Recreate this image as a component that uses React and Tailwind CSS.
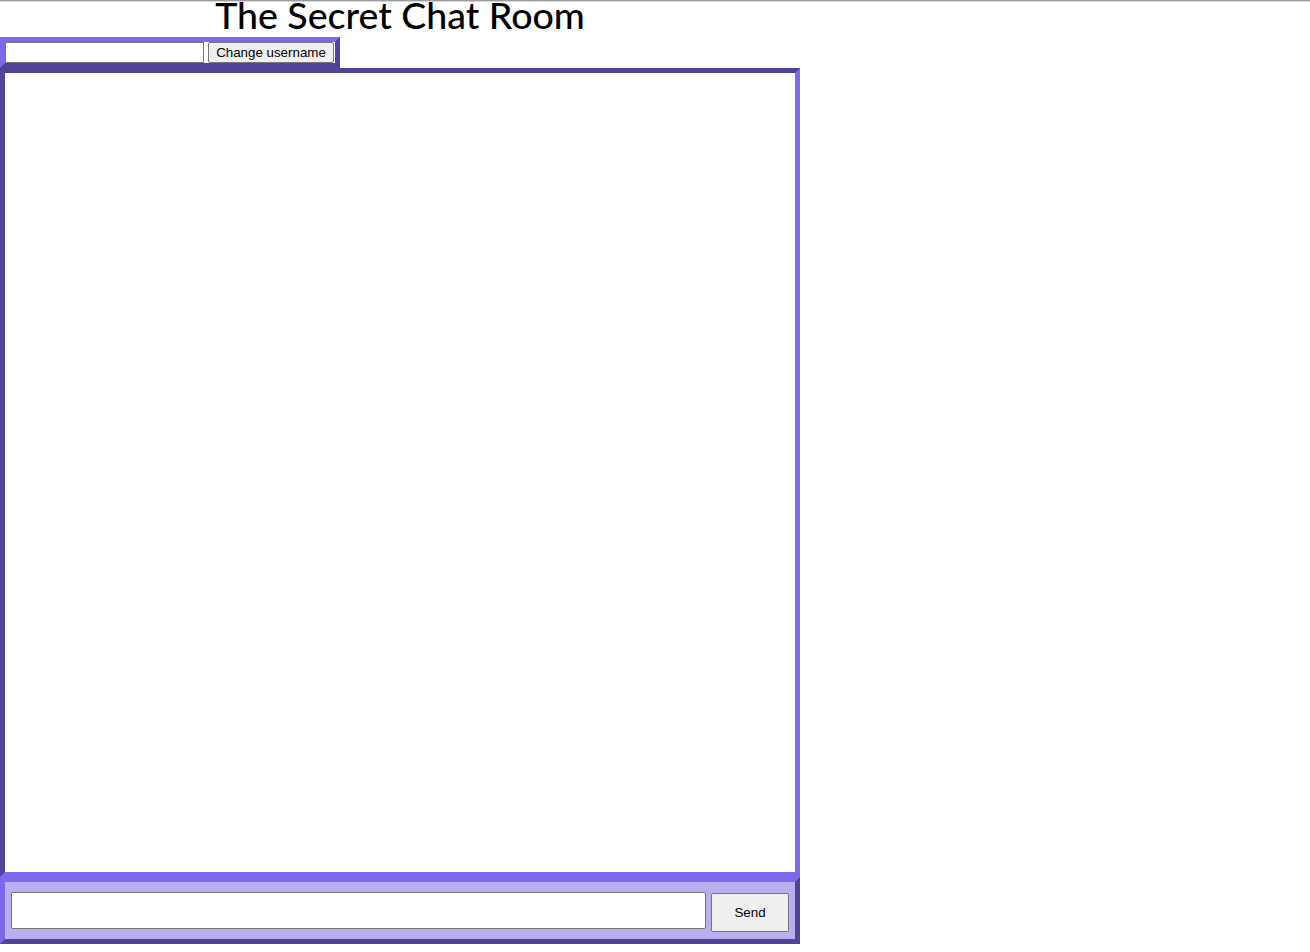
export default function App() {
  return (
    <div className="min-h-[952px] bg-white">
      <div className="h-px bg-[#9c9c9c]" />
      <div className="h-px bg-[#d6d6d6]" />
      <div className="w-[800px]">
        <h1 className="-mt-[5px] h-[40px] text-center text-[37.5px] leading-[35px] text-black font-['Lato',sans-serif] font-medium">
          The Secret Chat Room
        </h1>
        <div className="inline-flex items-center gap-[4px] border-[5px] [border-style:outset] border-[#7b68ee] bg-white pr-px">
          <input className="h-[21px] w-[199px] border border-[#767676] bg-white" />
          <button className="h-[21px] w-[126px] rounded-[2px] border border-[#767676] bg-[#efefef] text-[13.33px] leading-[15px] text-black font-['Liberation_Sans',Arial,sans-serif]">
            Change username
          </button>
        </div>
        <div className="h-[809px] border-[5px] [border-style:inset] border-[#7b68ee] bg-white" />
        <div className="flex items-start h-[67px] border-[5px] [border-style:outset] border-[#7b68ee] bg-[#bbaef0] pl-[6px] pt-[10px] pr-[6px] gap-[5px]">
          <input className="h-[37px] w-[695px] rounded-[2px] border border-[#767676] bg-white" />
          <button className="mt-[1px] h-[39px] w-[78px] rounded-[2px] border border-[#767676] bg-[#efefef] text-[13.33px] text-black font-['Liberation_Sans',Arial,sans-serif]">
            Send
          </button>
        </div>
      </div>
    </div>
  );
}
